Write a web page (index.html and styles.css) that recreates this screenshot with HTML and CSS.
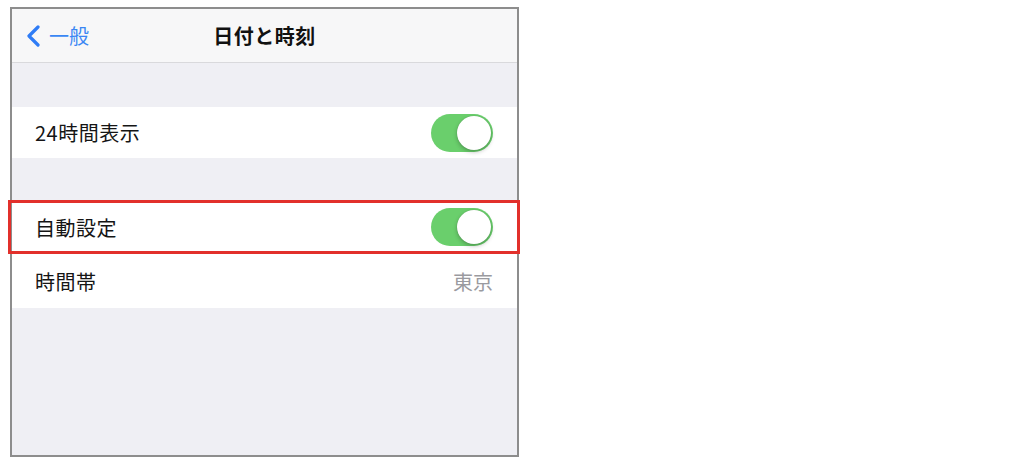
FILE: index.html
```html
<!DOCTYPE html>
<html lang="ja">
<head>
<meta charset="utf-8">
<title>日付と時刻</title>
<link rel="stylesheet" href="styles.css">
</head>
<body>
<div class="phone">
  <header class="navbar">
    <div class="back">
      <svg class="chevron" width="16" height="22" viewBox="0 0 16 22">
        <path d="M13 2 L4 11 L13 20" fill="none" stroke="#2f7cf6" stroke-width="3.2" stroke-linecap="round" stroke-linejoin="round"/>
      </svg>
      <span>一般</span>
    </div>
    <h1 class="title">日付と時刻</h1>
  </header>

  <div class="spacer spacer-top"></div>
  <section class="group">
    <div class="row">
      <span class="label">24時間表示</span>
      <span class="switch on"><span class="knob"></span></span>
    </div>
  </section>

  <div class="spacer spacer-mid"></div>
  <section class="group">
    <div class="row highlighted">
      <span class="label">自動設定</span>
      <span class="switch on"><span class="knob"></span></span>
    </div>
    <div class="row">
      <span class="label">時間帯</span>
      <span class="value">東京</span>
    </div>
  </section>
</div>
</body>
</html>
```

FILE: styles.css
```css
html, body {
  margin: 0;
  background: #ffffff;
}

body {
  font-family: "Noto Sans CJK JP", "Noto Sans", sans-serif;
  color: #111;
}

.phone {
  box-sizing: border-box;
  width: 509px;
  height: 450px;
  margin: 7px 0 0 10px;
  border: 2px solid #8d8d8d;
  background: #efeff4;
  display: flex;
  flex-direction: column;
}

.navbar {
  position: relative;
  height: 53px;
  flex: none;
  background: #f7f7f8;
  border-bottom: 1px solid #d9d9dc;
  display: flex;
  align-items: center;
  justify-content: center;
}

.back {
  position: absolute;
  left: 13px;
  top: 0;
  bottom: 0;
  display: flex;
  align-items: center;
  gap: 8px;
  color: #3a86f4;
  font-size: 20px;
}

.chevron {
  display: block;
}

.title {
  margin: 0;
  font-size: 20px;
  font-weight: 700;
  letter-spacing: 0.5px;
  color: #111;
}

.spacer-top {
  height: 44px;
}

.spacer-mid {
  height: 42px;
}

.group {
  background: #ffffff;
}

.row {
  position: relative;
  height: 51px;
  padding: 0 24px 0 23px;
  display: flex;
  align-items: center;
  justify-content: space-between;
}

.group .row + .row {
  height: 54px;
}

.row.highlighted {
  height: 54px;
}

/* red annotation frame drawn over the row */
.row.highlighted::after {
  content: "";
  position: absolute;
  left: -4px;
  right: -3px;
  top: 0;
  bottom: 0;
  border: 3px solid #e2302b;
  pointer-events: none;
}

.label {
  font-size: 20px;
  letter-spacing: 0.5px;
  color: #151515;
}

.value {
  font-size: 20px;
  color: #9a9a9f;
}

.switch {
  position: relative;
  width: 62px;
  height: 38px;
  border-radius: 19px;
  background: #6acf6c;
  flex: none;
}

.switch .knob {
  position: absolute;
  right: 2px;
  top: 2px;
  width: 34px;
  height: 34px;
  border-radius: 50%;
  background: #ffffff;
  box-shadow: 0 2px 4px rgba(0, 0, 0, 0.25), 0 0 1px rgba(0, 0, 0, 0.2);
}
```
